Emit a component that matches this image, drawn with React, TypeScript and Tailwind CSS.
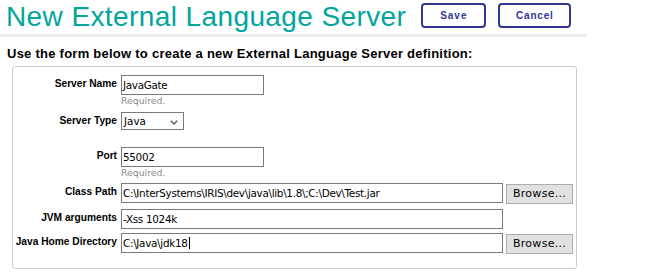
import type { ReactNode } from "react";

const SANS = "font-['Liberation_Sans',Arial,sans-serif]";
const UI = "font-['DejaVu_Sans',Tahoma,sans-serif]";

function HeaderButton({ children, className }: { children: ReactNode; className: string }) {
  return (
    <button
      className={`${SANS} ${className} h-[25px] rounded-[4px] border-2 border-[#333695] bg-white text-[10px] font-bold text-[#333695]`}
    >
      {children}
    </button>
  );
}

function Row({ label, children, className = "" }: { label: string; children: ReactNode; className?: string }) {
  return (
    <div className={`flex items-start ${className}`}>
      <div className={`${SANS} w-[104px] shrink-0 pt-[3px] text-right text-[10.2px] font-bold leading-[12px] text-black`}>
        {label}
      </div>
      <div className="ml-[4px]">{children}</div>
    </div>
  );
}

function TextBox({ value, className, caret }: { value: string; className: string; caret?: boolean }) {
  return (
    <div
      className={`${UI} ${className} h-[20px] overflow-hidden whitespace-nowrap border border-[#7a7a7a] bg-white pl-[1px] text-[10.4px] leading-[18px] tracking-[-0.3px] text-black`}
    >
      {value}
      {caret && <span className="ml-[1px] inline-block h-[12px] w-px bg-black align-[-2px]" />}
    </div>
  );
}

function Required() {
  return <div className={`${UI} text-[9.3px] leading-[12px] text-[#8a8a8a]`}>Required.</div>;
}

function Browse() {
  return (
    <button
      className={`${UI} ml-[3px] mt-[1px] h-[20px] w-[67px] border border-[#adadad] bg-[#e1e1e1] text-[11px] leading-[18px] tracking-[0.3px] text-black`}
    >
      Browse...
    </button>
  );
}

export default function App() {
  return (
    <div className="h-[274px] w-[648px] overflow-hidden bg-white">
      <div className="flex h-[34px] items-start">
        <h1 className={`${SANS} ml-[6px] mt-[1px] text-[28px] font-normal leading-[32px] tracking-[0.4px] text-[#00a59c]`}>
          New External Language Server
        </h1>
        <HeaderButton className="ml-[15px] mt-[3px] w-[65px] tracking-[1px]">Save</HeaderButton>
        <HeaderButton className="ml-[12px] mt-[3px] w-[73px] tracking-[0.8px]">Cancel</HeaderButton>
      </div>
      <div className="h-[3px] w-[587px] bg-[#eeeeee]" />

      <p className={`${SANS} ml-[7px] mt-[9px] text-[13px] font-bold leading-[16px] tracking-[0.25px] text-black`}>
        Use the form below to create a new External Language Server definition:
      </p>

      <div className="ml-[12px] mt-[4px] w-[565px] rounded-[3px] border border-[#cccccc] pb-[14px] pt-[8px]">
        <Row label="Server Name">
          <TextBox value="JavaGate" className="w-[143px]" />
          <Required />
        </Row>

        <Row label="Server Type" className="mt-[5px]">
          <div
            className={`${UI} flex h-[18px] w-[63px] items-center justify-between border border-[#7a7a7a] bg-white pl-[2px] pr-[5px] text-[10.4px] leading-[16px] text-black`}
          >
            <span>Java</span>
            <svg width="8" height="5" viewBox="0 0 8 5" className="mt-[2px]">
              <polyline points="0.8,0.8 4,4 7.2,0.8" fill="none" stroke="#555" strokeWidth="1.4" />
            </svg>
          </div>
        </Row>

        <Row label="Port" className="mt-[17px]">
          <TextBox value="55002" className="w-[143px]" />
          <Required />
        </Row>

        <Row label="Class Path" className="mt-[4px]">
          <div className="flex items-start">
            <TextBox value="C:\InterSystems\IRIS\dev\java\lib\1.8\;C:\Dev\Test.jar" className="w-[382px]" />
            <Browse />
          </div>
        </Row>

        <Row label="JVM arguments" className="mt-[5px]">
          <TextBox value="-Xss 1024k" className="w-[382px]" />
        </Row>

        <Row label="Java Home Directory" className="mt-[4px]">
          <div className="flex items-start">
            <TextBox value="C:\Java\jdk18" className="w-[382px]" caret />
            <Browse />
          </div>
        </Row>
      </div>
    </div>
  );
}
